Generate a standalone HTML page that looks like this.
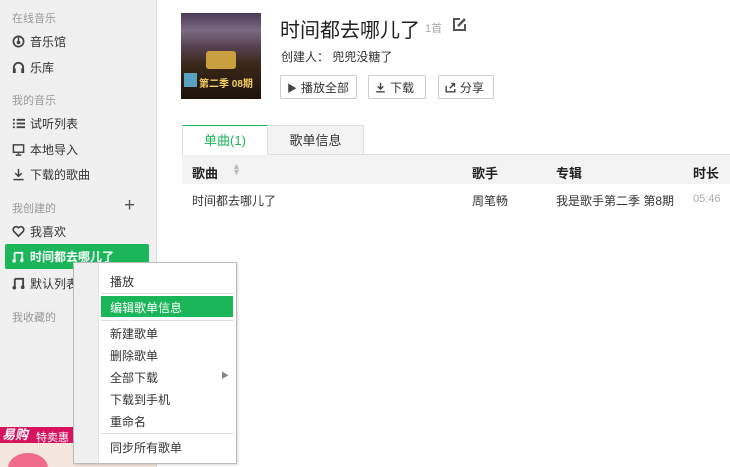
<!DOCTYPE html>
<html><head><meta charset="utf-8"><style>
*{margin:0;padding:0;box-sizing:border-box}
html,body{width:730px;height:467px;overflow:hidden}
body{background:#fff;font-family:"Liberation Sans","Microsoft YaHei","Noto Sans CJK SC",sans-serif;font-size:12px;color:#333;position:relative}
.side{position:absolute;left:0;top:0;width:157px;height:467px;background:#f0f0f0;border-right:1px solid #ddd;overflow:hidden}
.sec{position:absolute;left:12px;color:#999;font-size:11px}
.it{position:absolute;left:12px;font-size:12px;color:#333;display:flex;align-items:center;gap:5px;white-space:nowrap}
.it svg{width:13px;height:13px}
.sel{position:absolute;left:5px;top:244px;width:144px;height:25px;background:#1bb65a;border-radius:2px;color:#fff;font-weight:bold;display:flex;align-items:center;padding-left:7px;gap:6px;font-size:12px}
.ad{position:absolute;left:0;top:427px;width:157px;height:40px;overflow:hidden;background:linear-gradient(#d6135f 0,#d6135f 16px,#f3e6dc 16px)}
.ad span{position:absolute;left:2px;top:0;color:#fff;font-weight:bold;font-style:italic;font-size:13px;line-height:16px}
.ad small{position:absolute;left:36px;top:2px;color:#fff;font-size:11px}
.cover{position:absolute;left:181px;top:13px;width:80px;height:86px;overflow:hidden;background:linear-gradient(180deg,#4a3a58 0,#7a6a80 20%,#554050 40%,#3a2818 60%,#1e140c 100%)}
.cover i{position:absolute;left:25px;top:38px;width:30px;height:18px;background:#c9a040;border-radius:3px}
.cover b{position:absolute;left:18px;top:62px;color:#f4d060;font-size:10px;white-space:nowrap}
.cover em{position:absolute;left:3px;top:60px;width:13px;height:14px;background:#5aa0c0}
.title{position:absolute;left:280px;top:14px;font-size:20px;color:#222}
.cnt{position:absolute;left:425px;top:20px;color:#aaa;font-size:11px}
.creator{position:absolute;left:281px;top:48px;font-size:12px;color:#333}
.btn{position:absolute;top:75px;height:24px;border:1px solid #ccc;border-radius:2px;background:#fff;font-size:12px;display:flex;align-items:center;padding:0 6px;gap:4px;color:#333;white-space:nowrap}
.tabs{position:absolute;left:182px;top:125px;width:548px;height:30px;border-bottom:1px solid #ddd}
.tab1{position:absolute;left:0;top:0;width:85px;height:30px;border-top:1px solid #1bb65a;border-left:1px solid #ddd;background:#fff;color:#1bb65a;text-align:center;line-height:30px;font-size:13px}
.tab2{position:absolute;left:85px;top:0;width:97px;height:29px;border:1px solid #ddd;border-bottom:none;background:#f3f3f3;text-align:center;line-height:29px;font-size:13px}
.thead{position:absolute;left:182px;top:155px;width:548px;height:29px;background:#f3f3f3;font-weight:bold;font-size:13px;color:#222}
.thead span,.row span{position:absolute;top:8px;white-space:nowrap}
.row{position:absolute;left:182px;top:184px;width:548px;height:28px;font-size:12px}
.menu{position:absolute;left:73px;top:262px;width:164px;height:202px;background:#fff;border:1px solid #bbb;box-shadow:1px 1px 2px rgba(0,0,0,.15)}
.gut{position:absolute;left:0;top:0;width:25px;height:100%;background:#f0f0f0;border-right:1px solid #e4e4e4}
.mi{position:absolute;left:36px;font-size:12px;color:#333}
.hl{position:absolute;left:27px;top:33px;width:132px;height:21px;background:#1bb65a}
.sep{position:absolute;left:27px;width:132px;height:1px;background:#ddd}
</style></head><body>
<div class="side">
<div class="sec" style="top:10px">在线音乐</div>
<div class="it" style="top:33px"><svg viewBox="0 0 14 14"><circle cx="7" cy="7" r="5.5" fill="none" stroke="#444" stroke-width="1.8"/><circle cx="7" cy="8" r="2" fill="#444"/><path d="M7 2v6" stroke="#444" stroke-width="1.5"/></svg>音乐馆</div>
<div class="it" style="top:59px"><svg viewBox="0 0 14 14"><path d="M2 11V7a5 5 0 0110 0v4" fill="none" stroke="#444" stroke-width="2"/><rect x="1" y="8" width="3" height="5" fill="#444"/><rect x="10" y="8" width="3" height="5" fill="#444"/></svg>乐库</div>
<div class="sec" style="top:92px">我的音乐</div>
<div class="it" style="top:115px"><svg viewBox="0 0 14 14" fill="#444"><rect x="1" y="2" width="2" height="2"/><rect x="5" y="2" width="9" height="2"/><rect x="1" y="6" width="2" height="2"/><rect x="5" y="6" width="9" height="2"/><rect x="1" y="10" width="2" height="2"/><rect x="5" y="10" width="9" height="2"/></svg>试听列表</div>
<div class="it" style="top:141px"><svg viewBox="0 0 14 14"><rect x="1.5" y="2" width="11" height="8" fill="none" stroke="#444" stroke-width="1.6"/><path d="M7 10v2M4 13h6" stroke="#444" stroke-width="1.6"/></svg>本地导入</div>
<div class="it" style="top:166px"><svg viewBox="0 0 14 14"><path d="M7 1v8M3.5 5.5L7 9l3.5-3.5M1.5 12.5h11" fill="none" stroke="#444" stroke-width="1.6"/></svg>下载的歌曲</div>
<div class="sec" style="top:200px">我创建的</div>
<div style="position:absolute;left:124px;top:197px;font-size:19px;color:#555;line-height:18px">+</div>
<div class="it" style="top:223px"><svg viewBox="0 0 14 14"><path d="M7 12L2 7a3 3 0 015-4 3 3 0 015 4z" fill="none" stroke="#444" stroke-width="1.8"/></svg>我喜欢</div>
<div class="sel"><svg width="12" height="12" viewBox="0 0 14 14"><path d="M3 2h9v9M3 2v9" stroke="#fff" stroke-width="2" fill="none"/><circle cx="2.5" cy="11.5" r="2" fill="#fff"/><circle cx="11.5" cy="11" r="2" fill="#fff"/></svg>时间都去哪儿了</div>
<div class="it" style="top:275px"><svg viewBox="0 0 14 14"><path d="M3 2h9v9M3 2v9" stroke="#444" stroke-width="2" fill="none"/><circle cx="2.5" cy="11.5" r="2" fill="#444"/><circle cx="11.5" cy="11" r="2" fill="#444"/></svg>默认列表</div>
<div class="sec" style="top:309px">我收藏的</div>
<div class="ad"><span>易购</span><small>特卖惠</small><div style="position:absolute;left:8px;top:26px;width:40px;height:30px;border-radius:50%;background:#f06a8a"></div></div>
</div>
<div class="cover"><i></i><em></em><b>第二季 08期</b></div>
<div class="title">时间都去哪儿了</div>
<div class="cnt">1首</div>
<svg style="position:absolute;left:452px;top:17px" width="15" height="15" viewBox="0 0 15 15"><path d="M8 2H2v11h11V7" fill="none" stroke="#555" stroke-width="2"/><path d="M6 9l7-7" stroke="#555" stroke-width="2.5"/></svg>
<div class="creator">创建人： <span style="color:#333">兜兜没糖了</span></div>
<div class="btn" style="left:280px;width:77px"><span style="font-size:10px;color:#444">▶</span>播放全部</div>
<div class="btn" style="left:368px;width:58px"><svg width="11" height="11" viewBox="0 0 14 14"><path d="M7 1v8M3.5 5.5L7 9l3.5-3.5M1.5 12.5h11" fill="none" stroke="#444" stroke-width="1.8"/></svg>下载</div>
<div class="btn" style="left:438px;width:56px"><svg width="11" height="11" viewBox="0 0 14 14"><path d="M1.5 5v7.5h11V9M6 8l6-6M8 2h4v4" fill="none" stroke="#444" stroke-width="1.8"/></svg>分享</div>
<div class="tabs"><div class="tab1">单曲(1)</div><div class="tab2">歌单信息</div></div>
<div class="thead"><span style="left:10px">歌曲</span><span style="left:50px;color:#bbb;font-size:9px;top:8px;line-height:6px">▲<br>▼</span><span style="left:290px">歌手</span><span style="left:374px">专辑</span><span style="left:511px">时长</span></div>
<div class="row"><span style="left:10px">时间都去哪儿了</span><span style="left:290px">周笔畅</span><span style="left:374px">我是歌手第二季 第8期</span><span style="left:511px;top:9px;color:#aaa;font-size:11px">05:46</span></div>
<div class="menu">
<div class="gut"></div>
<div class="mi" style="top:10px">播放</div>
<div class="sep" style="top:30px"></div>
<div class="hl"></div>
<div class="mi" style="top:36px;color:#fff">编辑歌单信息</div>
<div class="sep" style="top:57px"></div>
<div class="mi" style="top:62px">新建歌单</div>
<div class="mi" style="top:84px">删除歌单</div>
<div class="mi" style="top:106px">全部下载</div>
<div style="position:absolute;left:147px;top:107px;font-size:8px;color:#888">▶</div>
<div class="mi" style="top:128px">下载到手机</div>
<div class="mi" style="top:150px">重命名</div>
<div class="sep" style="top:170px"></div>
<div class="mi" style="top:176px">同步所有歌单</div>
</div>
</body></html>
